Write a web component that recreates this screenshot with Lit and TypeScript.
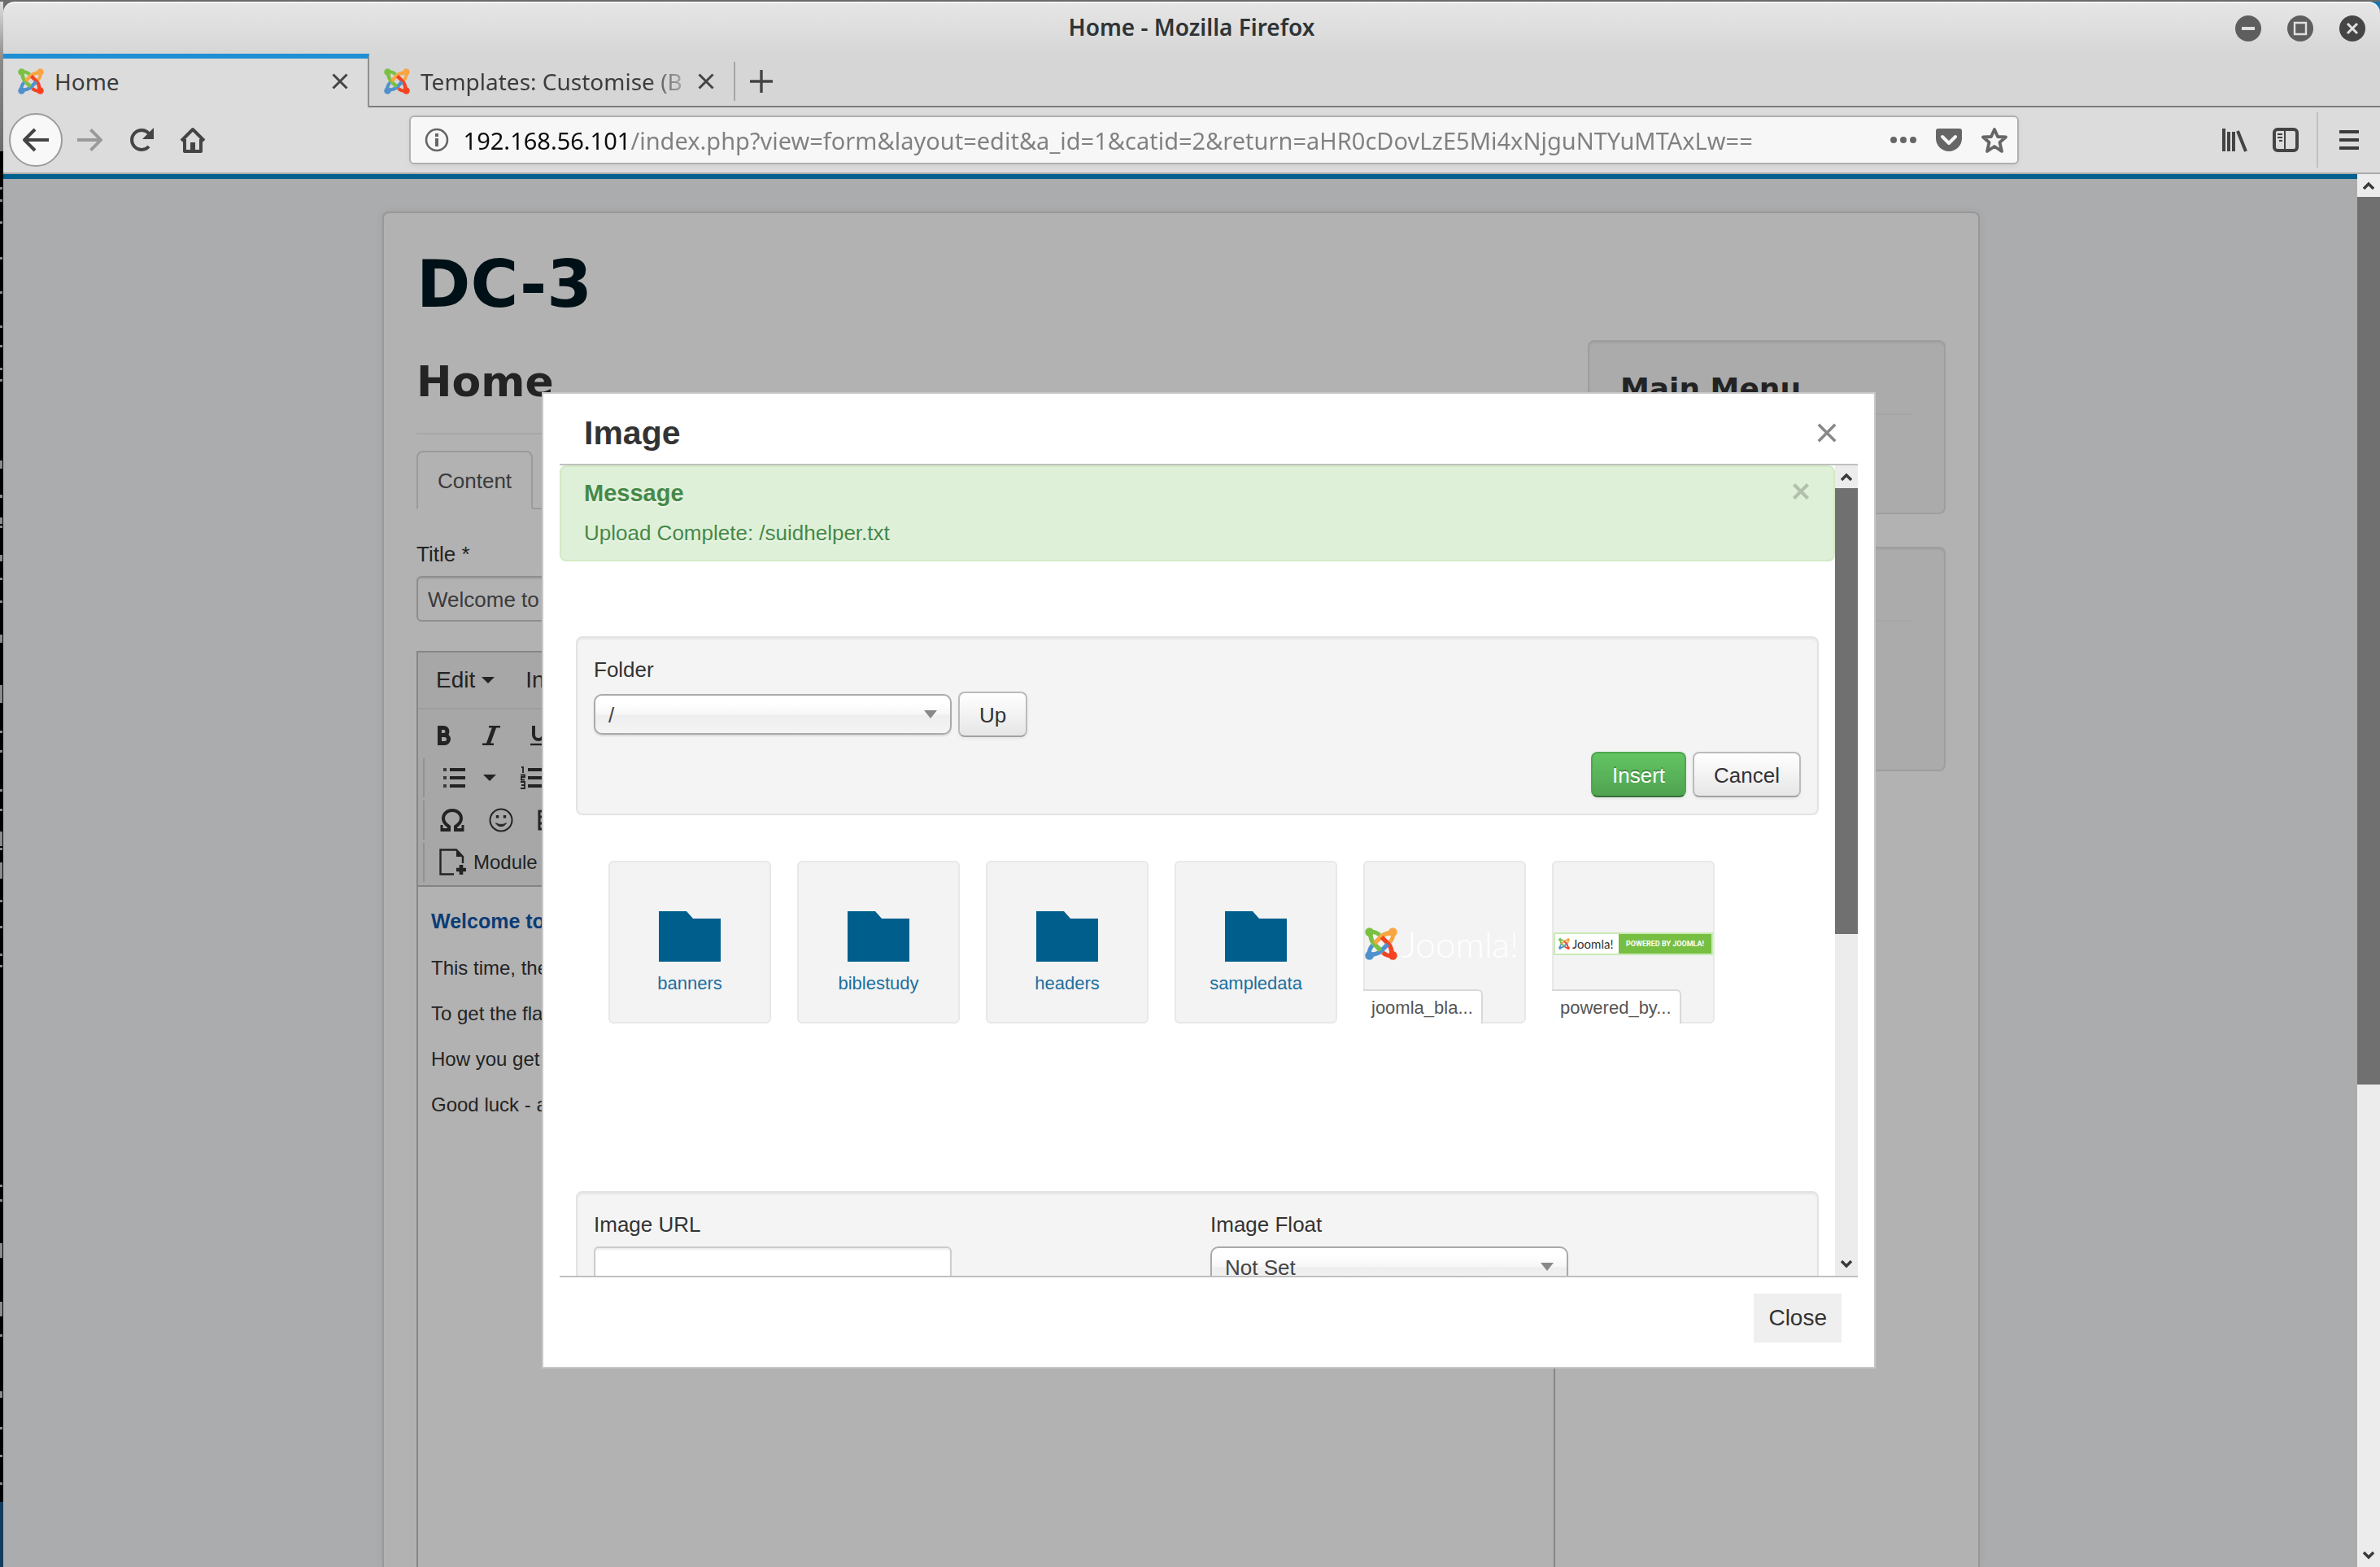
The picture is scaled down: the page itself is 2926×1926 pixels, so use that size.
import { LitElement, html, css, svg } from "lit";
import { customElement } from "lit/decorators.js";

const joomlaMark = (size: number) => html`
  <svg class="mark" width=${size} height=${size} viewBox="0 0 64 64" aria-hidden="true">
    ${[
      ["#7ac143", 0],
      ["#f9a541", 90],
      ["#f44321", 180],
      ["#5091cd", 270],
    ].map(
      ([color, turn]) => svg`
        <g transform="rotate(${turn} 32 32)" fill="none" stroke=${color} stroke-width="9">
          <circle cx="9" cy="9" r="8.5" fill=${color} stroke="none"></circle>
          <path d="M10 8C19 8 24 10 29 15" stroke-width="8"></path>
          <path d="M11 12C11 23 14 28 19 33L31 45"></path>
        </g>`,
    )}
    <path d="M31 45L25 39" stroke="#7ac143" stroke-width="9"></path>
  </svg>
`;

const cross = (size: number, color: string, width: number) => html`
  <svg width=${size} height=${size} viewBox="0 0 20 20" aria-hidden="true">
    <path d="M1.5 1.5L18.5 18.5M18.5 1.5L1.5 18.5" stroke=${color} stroke-width=${width} fill="none"></path>
  </svg>
`;

const chevron = (direction: "up" | "down") => html`
  <svg width="14" height="10" viewBox="0 0 14 10" aria-hidden="true">
    <path
      d=${direction === "up" ? "M1 9L7 3L13 9" : "M1 1L7 7L13 1"}
      fill="none"
      stroke="#3a3a3a"
      stroke-width="3.4"
    ></path>
  </svg>
`;

const caret = html`
  <svg width="16" height="8" viewBox="0 0 16 8" aria-hidden="true"><path d="M0 0H16L8 8Z" fill="#333"></path></svg>
`;

const base = css`
  * {
    box-sizing: border-box;
  }
  button,
  input,
  select {
    font: inherit;
    color: inherit;
    margin: 0;
    padding: 0;
    border: 0;
    background: none;
  }
  button {
    display: flex;
    align-items: center;
    justify-content: center;
    cursor: pointer;
  }
  svg {
    display: block;
    flex: none;
  }
  a {
    text-decoration: none;
  }
  h1,
  h2,
  h3,
  h4,
  p,
  ul {
    margin: 0;
    padding: 0;
  }
`;

const scrollbarStyles = css`
  .scrollbar {
    flex: none;
    width: 28px;
    display: flex;
    flex-direction: column;
    background: #ececec;
  }
  .scrollbar button {
    flex: none;
    height: 28px;
  }
  .thumb {
    background: #707070;
  }
  .track {
    flex: 1;
  }
`;

@customElement("browser-chrome")
export class BrowserChrome extends LitElement {
  static styles = [
    base,
    css`
      :host {
        display: block;
        font-family: "Noto Sans", "Open Sans", sans-serif;
        font-size: 28px;
        color: #2e3436;
      }
      .titlebar {
        display: grid;
        grid-template-columns: 1fr auto 1fr;
        align-items: center;
        height: 64px;
        padding: 0 18px;
        border-top: 2px solid #f4f4f4;
        border-radius: 14px 14px 0 0;
        background: linear-gradient(#e6e6e6, #d6d6d6);
      }
      .caption {
        grid-column: 2;
        font-size: 28px;
        line-height: 40px;
        font-weight: 600;
        padding-bottom: 4px;
      }
      .controls {
        display: flex;
        justify-content: flex-end;
        gap: 32px;
      }
      .tabs {
        display: flex;
        height: 66px;
        background: #d6d6d6;
      }
      .tab {
        display: flex;
        align-items: center;
        gap: 13px;
        width: 448px;
        padding: 4px 24px 0 18px;
        border-bottom: 2px solid #7c7c7c;
      }
      .tab.active {
        width: 450px;
        padding: 0 24px 4px 18px;
        border-top: 6px solid #1f8fd3;
        border-right: 2px solid #8f8f8f;
        border-bottom: 0;
        background: #dcdcdc;
      }
      .tab-name {
        flex: 1;
        overflow: hidden;
        white-space: nowrap;
        line-height: 40px;
        color: #3c3c3c;
      }
      .tab-name.fade {
        mask-image: linear-gradient(to right, #000 280px, transparent 340px);
      }
      .new-tab {
        display: flex;
        flex: 1;
        align-items: center;
        padding-top: 4px;
        border-bottom: 2px solid #7c7c7c;
      }
      .new-tab button {
        width: 66px;
        height: 48px;
        border-left: 2px solid #a6a6a6;
      }
      .nav {
        display: flex;
        align-items: center;
        height: 82px;
        padding: 0 26px 0 7px;
        background: #dcdcdc;
        border-bottom: 2px solid #aaa;
      }
      .back {
        width: 66px;
        height: 66px;
        border: 2px solid #9c9c9c;
        border-radius: 50%;
        background: #f8f8f8;
      }
      .history {
        display: flex;
        align-items: center;
        gap: 32px;
        padding-left: 17px;
      }
      .spacer {
        flex: 10;
      }
      .address {
        flex: 78;
        display: flex;
        align-items: center;
        height: 60px;
        padding: 0 12px 0 17px;
        border: 2px solid #b0b0b0;
        border-radius: 6px;
        background: #f7f7f7;
        box-shadow: 0 2px 6px rgba(0, 0, 0, 0.06);
      }
      .url {
        flex: 1;
        min-width: 0;
        height: 50px;
        margin: 0 18px;
        font-size: 29px;
        background-image: linear-gradient(to right, #0c0c0d 206px, #808080 206px);
        background-clip: text;
        -webkit-text-fill-color: transparent;
        outline: none;
      }
      .page-actions {
        display: flex;
        align-items: center;
        gap: 24px;
      }
      .tools {
        display: flex;
        align-items: center;
        gap: 30px;
      }
      .tools .menu {
        height: 68px;
        padding-left: 26px;
        margin-left: -8px;
        border-left: 2px solid #c0c0c0;
      }
    `,
  ];

  render() {
    return html`
      <header class="titlebar">
        <div class="caption">Home - Mozilla Firefox</div>
        <div class="controls">
          <button aria-label="Minimise">
            <svg width="32" height="32" viewBox="0 0 32 32">
              <circle cx="16" cy="16" r="16" fill="#5e5e5e"></circle>
              <path d="M8 16H24" stroke="#e0e0e0" stroke-width="4"></path>
            </svg>
          </button>
          <button aria-label="Maximise">
            <svg width="32" height="32" viewBox="0 0 32 32">
              <circle cx="16" cy="16" r="16" fill="#5e5e5e"></circle>
              <path d="M9 9H23V23H9Z" fill="none" stroke="#e0e0e0" stroke-width="2.4"></path>
            </svg>
          </button>
          <button aria-label="Close window">
            <svg width="32" height="32" viewBox="0 0 32 32">
              <circle cx="16" cy="16" r="16" fill="#454545"></circle>
              <path d="M10 10L22 22M22 10L10 22" stroke="#e0e0e0" stroke-width="3"></path>
            </svg>
          </button>
        </div>
      </header>

      <div class="tabs">
        <div class="tab active">
          ${joomlaMark(32)}
          <span class="tab-name">Home</span>
          <button aria-label="Close tab">${cross(20, "#444", 3)}</button>
        </div>
        <div class="tab">
          ${joomlaMark(32)}
          <span class="tab-name fade">Templates: Customise (B</span>
          <button aria-label="Close tab">${cross(20, "#444", 3)}</button>
        </div>
        <div class="new-tab">
          <button aria-label="New tab">
            <svg width="28" height="28" viewBox="0 0 28 28">
              <path d="M14 0V28M0 14H28" stroke="#444" stroke-width="3.4"></path>
            </svg>
          </button>
        </div>
      </div>

      <nav class="nav">
        <button class="back" aria-label="Back">
          <svg width="34" height="30" viewBox="0 0 34 30" fill="none" stroke="#444" stroke-width="4">
            <path d="M33 15H3M16 2L3 15L16 28" stroke-linejoin="round"></path>
          </svg>
        </button>
        <div class="history">
          <button aria-label="Forward">
            <svg width="33" height="30" viewBox="0 0 34 30" fill="none" stroke="#999" stroke-width="4">
              <path d="M1 15H31M18 2L31 15L18 28" stroke-linejoin="round"></path>
            </svg>
          </button>
          <button aria-label="Reload">
            <svg width="30" height="30" viewBox="0 0 30 30" fill="none" stroke="#444" stroke-width="4">
              <path d="M24 23A12 12 0 1 1 24 7"></path>
              <path d="M30 0V14H16Z" fill="#444" stroke="none"></path>
            </svg>
          </button>
          <button aria-label="Home">
            <svg width="32" height="32" viewBox="0 0 32 32" fill="none" stroke="#444" stroke-width="4">
              <path d="M2 17L16 3L30 17M6 15V30H26V15" stroke-linejoin="round"></path>
              <path d="M16 19V30" stroke-width="6"></path>
            </svg>
          </button>
        </div>
        <div class="spacer"></div>
        <div class="address">
          <svg width="30" height="30" viewBox="0 0 30 30">
            <circle cx="15" cy="15" r="13" fill="none" stroke="#666" stroke-width="2.6"></circle>
            <path d="M15 13V23M15 7V11" stroke="#666" stroke-width="4"></path>
          </svg>
          <input
            class="url"
            type="text"
            aria-label="Address"
            spellcheck="false"
            .value=${"192.168.56.101/index.php?view=form&layout=edit&a_id=1&catid=2&return=aHR0cDovLzE5Mi4xNjguNTYuMTAxLw=="}
          />
          <div class="page-actions">
            <button aria-label="Page actions">
              <svg width="32" height="8" viewBox="0 0 32 8" fill="#666">
                <circle cx="4" cy="4" r="4"></circle>
                <circle cx="16" cy="4" r="4"></circle>
                <circle cx="28" cy="4" r="4"></circle>
              </svg>
            </button>
            <button aria-label="Save to Pocket">
              <svg width="32" height="28" viewBox="0 0 32 28">
                <path d="M3 0H29Q32 0 32 3V12A16 16 0 0 1 0 12V3Q0 0 3 0Z" fill="#666"></path>
                <path
                  d="M8 10L16 18L24 10"
                  fill="none"
                  stroke="#f7f7f7"
                  stroke-width="4"
                  stroke-linecap="round"
                  stroke-linejoin="round"
                ></path>
              </svg>
            </button>
            <button aria-label="Bookmark this page">
              <svg width="32" height="32" viewBox="0 0 32 32">
                <path
                  d="M16 3L20 12L30 12.5L22.500 19L25 30L16 24L7 30L9.500 19L2 12.500L12 12Z"
                  fill="none"
                  stroke="#666"
                  stroke-width="3.8"
                  stroke-linejoin="round"
                ></path>
              </svg>
            </button>
          </div>
        </div>
        <div class="spacer"></div>
        <div class="tools">
          <button aria-label="Library">
            <svg width="32" height="30" viewBox="0 0 32 30" stroke="#444" stroke-width="4">
              <path d="M2 1V29M8 5V29M14 5V29M19 4L29 29"></path>
            </svg>
          </button>
          <button aria-label="Sidebars">
            <svg width="32" height="30" viewBox="0 0 32 30" fill="none" stroke="#444">
              <rect x="2" y="2" width="28" height="26" rx="4" stroke-width="4"></rect>
              <path d="M15 3V27" stroke-width="2"></path>
              <path d="M6 8H12M6 12H12M8 16H12" stroke-width="2"></path>
            </svg>
          </button>
          <button class="menu" aria-label="Open menu">
            <svg width="24" height="24" viewBox="0 0 24 24" stroke="#3c3c3c" stroke-width="4">
              <path d="M0 2H24M0 12H24M0 22H24"></path>
            </svg>
          </button>
        </div>
      </nav>
    `;
  }
}

@customElement("article-form")
export class ArticleForm extends LitElement {
  static styles = [
    base,
    css`
      :host {
        display: flex;
        flex: 1;
        min-width: 0;
        flex-direction: column;
        overflow: hidden;
        padding: 40px 38px 0 40px;
        border-top: 6px solid #08c;
        background: #f4f6f8;
        font-family: "Liberation Sans", Arial, sans-serif;
        font-size: 26px;
        line-height: 38px;
        color: #333;
      }
      .container {
        flex: 1;
        display: flex;
        flex-direction: column;
        width: 100%;
        max-width: 1964px;
        margin: 0 auto;
        padding: 40px 40px 0;
        border: 2px solid #dadada;
        border-bottom: 0;
        border-radius: 8px 8px 0 0;
        background: #fff;
        box-shadow: 0 0 12px rgba(0, 0, 0, 0.05);
      }
      h1,
      h2,
      h3 {
        font-family: "DejaVu Sans", Verdana, sans-serif;
        font-weight: bold;
      }
      .brand {
        font-size: 80px;
        line-height: 96px;
        color: #001722;
        margin-bottom: 20px;
      }
      .columns {
        flex: 1;
        display: flex;
        gap: 40px;
      }
      .main {
        flex: 1;
        min-width: 0;
        display: flex;
        flex-direction: column;
      }
      .page-title {
        font-size: 52px;
        line-height: 62px;
        padding: 20px 0 32px;
        margin-bottom: 20px;
        border-bottom: 2px solid #eee;
      }
      .tablist {
        display: flex;
        margin-bottom: 36px;
        border-bottom: 2px solid #ddd;
      }
      .tablist button {
        padding: 16px 24px 14px;
        margin-bottom: -2px;
        border: 2px solid #ddd;
        border-bottom-color: #fff;
        border-radius: 8px 8px 0 0;
        color: #555;
      }
      .field {
        width: 440px;
        height: 56px;
        margin: 8px 0 36px;
        padding: 2px 12px 0;
        border: 2px solid #ccc;
        border-radius: 6px;
        color: #555;
        box-shadow: inset 0 2px 2px rgba(0, 0, 0, 0.075);
      }
      .editor {
        flex: 1;
        border: 2px solid #c0c0c0;
        border-bottom: 0;
      }
      .menubar {
        display: flex;
        gap: 38px;
        height: 70px;
        padding-left: 22px;
        border-bottom: 2px solid #e2e2e2;
        background: #f0f0f0;
        font-size: 28px;
      }
      .menubar button {
        gap: 8px;
      }
      .toolbars {
        padding: 6px 0 2px;
        border-bottom: 2px solid #bcbcbc;
        background: #f0f0f0;
      }
      .row {
        display: flex;
        height: 48px;
        margin: 2px 6px;
        border-left: 2px solid #d0d0d0;
      }
      .row + .row {
        margin-top: 4px;
      }
      .row.first {
        gap: 2px;
        margin-left: 2px;
        border-left-color: transparent;
      }
      .row.first button {
        width: 56px;
      }
      .row.lists .wide {
        width: 72px;
      }
      .row.lists .wider {
        width: 88px;
      }
      .row.symbols {
        padding-left: 4px;
      }
      .row.symbols button {
        width: 60px;
      }
      .row.modules {
        padding-left: 18px;
        font-size: 24px;
      }
      .row.modules button {
        gap: 8px;
      }
      .copy {
        padding: 24px 16px;
        font-size: 24px;
        line-height: 36px;
      }
      .copy p {
        margin-bottom: 20px;
      }
      .copy .lead {
        margin-bottom: 22px;
        font-size: 25px;
        font-weight: bold;
        color: #1257a8;
      }
      .side {
        width: 440px;
      }
      .well {
        padding: 34px 38px;
        border: 2px solid #e3e3e3;
        border-radius: 8px;
        background: #f5f5f5;
        box-shadow: inset 0 2px 2px rgba(0, 0, 0, 0.05);
        min-height: 214px;
        margin-bottom: 40px;
      }
      .well.tall {
        min-height: 276px;
      }
      .well h3 {
        font-size: 36px;
        line-height: 48px;
        min-height: 56px;
        border-bottom: 2px solid #eee;
      }
    `,
  ];

  render() {
    return html`
      <div class="container">
        <h1 class="brand">DC-3</h1>
        <div class="columns">
          <main class="main">
            <h2 class="page-title">Home</h2>
            <div class="tablist" role="tablist"><button role="tab" aria-selected="true">Content</button></div>
            <label for="title">Title *</label>
            <input class="field" id="title" type="text" .value=${"Welcome to"} />
            <div class="editor">
              <div class="menubar">
                <button>Edit ${caret}</button>
                <button>Insert ${caret}</button>
              </div>
              <div class="toolbars">
                <div class="row first">
                  <button aria-label="Bold">
                    <svg width="16" height="24" viewBox="0 0 16 24" fill="none" stroke="#333" stroke-width="5">
                      <path d="M2.500 2.500H7.500A4.500 4.500 0 0 1 7.500 11.500H2.500ZM2.500 11.500H8.500A5 5 0 0 1 8.500 21.500H2.500Z"></path>
                    </svg>
                  </button>
                  <button aria-label="Italic">
                    <svg width="22" height="24" viewBox="0 0 22 24" fill="none" stroke="#333">
                      <path d="M8 1.200H22M0 22.800H14" stroke-width="2.400"></path>
                      <path d="M15 1L7 23" stroke-width="5"></path>
                    </svg>
                  </button>
                  <button aria-label="Underline">
                    <svg width="20" height="26" viewBox="0 0 20 26" fill="none" stroke="#333">
                      <path d="M4 1V12A6 6 0 0 0 16 12V1" stroke-width="4"></path>
                      <path d="M0 24H20" stroke-width="2.400"></path>
                    </svg>
                  </button>
                </div>
                <div class="row lists">
                  <button class="wide" aria-label="Bulleted list">
                    <svg width="28" height="26" viewBox="0 0 28 26" stroke="#333" stroke-width="4">
                      <path d="M9 3H28M9 13H28M9 23H28"></path>
                      <path d="M1 3H5M1 13H5M1 23H5" stroke="#555"></path>
                    </svg>
                  </button>
                  <button aria-label="Bullet styles">${caret}</button>
                  <button class="wider" aria-label="Numbered list">
                    <svg width="28" height="28" viewBox="0 0 28 28" fill="none" stroke="#333">
                      <path d="M9 4H28M9 14H28M9 24H28" stroke-width="4"></path>
                      <path d="M1 1H3V8M0 10.500H5V13H1V16.500H5M0 19H5V27H0M1 23H5" stroke-width="1.800"></path>
                    </svg>
                  </button>
                </div>
                <div class="row symbols">
                  <button aria-label="Special character">
                    <svg width="30" height="28" viewBox="0 0 30 28" fill="none" stroke="#333" stroke-width="4">
                      <path d="M1 26H11V22C5 18 4 15 4 12C4 6 9 2 15 2S26 6 26 12C26 15 25 18 19 22V26H29"></path>
                      <path d="M2 20V28M28 20V28" stroke-width="3"></path>
                    </svg>
                  </button>
                  <button aria-label="Emoticons">
                    <svg width="30" height="30" viewBox="0 0 30 30" fill="none" stroke="#333" stroke-width="2">
                      <circle cx="15" cy="15" r="13.500"></circle>
                      <path d="M10.500 9V12.500M19.500 9V12.500" stroke-width="3.400"></path>
                      <path d="M8.500 18.500C11 24 19 24 21.500 18.500C18 21 12 21 8.500 18.500Z" fill="#333" stroke-width="1"></path>
                    </svg>
                  </button>
                  <button aria-label="Media">
                    <svg width="30" height="26" viewBox="0 0 30 26" fill="none" stroke="#333" stroke-width="3">
                      <path d="M2 2H28V24H2ZM8 2V24M22 2V24M2 9H8M2 17H8M22 9H28M22 17H28"></path>
                    </svg>
                  </button>
                </div>
                <div class="row modules">
                  <button>
                    <svg width="34" height="34" viewBox="0 0 34 34" fill="none" stroke="#333" stroke-width="2.400">
                      <path d="M18 31.500H1.500V1.500H21L29 10V18"></path>
                      <path d="M21 1L29 10H21Z" fill="#333" stroke="none"></path>
                      <path d="M27 20V32M21 26H33" stroke-width="4.600"></path>
                    </svg>
                    Module
                  </button>
                </div>
              </div>
              <div class="copy">
                <p class="lead">Welcome to DC-3</p>
                <p>This time, there</p>
                <p>To get the flag</p>
                <p>How you get it</p>
                <p>Good luck - and</p>
              </div>
            </div>
          </main>
          <aside class="side">
            <section class="well"><h3>Main Menu</h3></section>
            <section class="well tall"><h3></h3></section>
          </aside>
        </div>
      </div>
    `;
  }
}

@customElement("image-dialog")
export class ImageDialog extends LitElement {
  static styles = [
    base,
    scrollbarStyles,
    css`
      :host {
        display: flex;
        flex-direction: column;
        padding: 0 20px;
        border: 2px solid #c8c8c8;
        background: #fff;
        font-family: "Liberation Sans", Arial, sans-serif;
        font-size: 26px;
        line-height: 38px;
        color: #333;
      }
      .head {
        display: flex;
        align-items: center;
        justify-content: space-between;
        padding: 24px 26px 14px 30px;
        border-bottom: 2px solid #c0c0c0;
      }
      .head h3 {
        font-size: 41px;
        line-height: 48px;
      }
      .body {
        flex: 1;
        min-height: 0;
        display: flex;
        border-bottom: 2px solid #c0c0c0;
      }
      .content {
        flex: 1;
        min-width: 0;
        overflow: hidden;
      }
      .alert {
        display: flex;
        justify-content: space-between;
        align-items: flex-start;
        padding: 14px 30px 14px 28px;
        margin-bottom: 92px;
        border: 2px solid #d3eac6;
        border-radius: 8px;
        background: #def0d8;
        color: #468847;
        text-shadow: 0 2px 0 rgba(255, 255, 255, 0.5);
      }
      .alert h4 {
        font-size: 29px;
        line-height: 36px;
        margin-bottom: 12px;
      }
      .alert button {
        padding-top: 6px;
      }
      .well {
        margin: 0 20px;
        padding: 20px;
        border: 2px solid #e3e3e3;
        border-radius: 8px;
        background: #f4f4f4;
        box-shadow: inset 0 2px 2px rgba(0, 0, 0, 0.05);
      }
      .line {
        display: flex;
        align-items: center;
        gap: 8px;
        margin-top: 8px;
      }
      .actions {
        display: flex;
        justify-content: flex-end;
        gap: 8px;
        margin-top: 18px;
      }
      label {
        display: block;
      }
      .select {
        display: grid;
        align-items: center;
        width: 440px;
      }
      .select select {
        grid-area: 1 / 1;
        appearance: none;
        height: 50px;
        padding: 2px 16px 0;
        border: 2px solid #aaa;
        border-radius: 10px;
        background: linear-gradient(#fff 20%, #f6f6f6 50%, #eee 52%, #f4f4f4 100%);
        box-shadow: 0 2px 2px rgba(0, 0, 0, 0.1);
        color: #444;
      }
      .select svg {
        grid-area: 1 / 1;
        justify-self: end;
        margin-right: 18px;
        pointer-events: none;
      }
      .btn {
        height: 56px;
        padding: 2px 24px 0;
        border: 2px solid #bbb;
        border-bottom-color: #a2a2a2;
        border-radius: 8px;
        background: linear-gradient(#fff, #e6e6e6);
        box-shadow: 0 2px 4px rgba(0, 0, 0, 0.05);
      }
      .btn.primary {
        border-color: #4fa651 #4fa651 #387038;
        background: linear-gradient(#62c462, #51a351);
        color: #fff;
        text-shadow: 0 -2px 0 rgba(0, 0, 0, 0.25);
      }
      .tiles {
        display: flex;
        flex-wrap: wrap;
        gap: 32px;
        margin: 56px 32px 206px 60px;
        list-style: none;
        font-size: 22px;
        line-height: 34px;
      }
      .tile {
        display: flex;
        flex-direction: column;
        align-items: center;
        width: 200px;
        height: 200px;
        border: 2px solid #e8e8e8;
        border-radius: 6px;
        background: #f3f3f3;
        color: #555;
      }
      .tile.folder {
        gap: 10px;
        padding-top: 60px;
        color: #1c6f9f;
      }
      .picture {
        display: flex;
        align-items: center;
        width: 196px;
        height: 44px;
        margin-top: 78px;
        font-family: Lato, sans-serif;
        line-height: 24px;
        white-space: nowrap;
      }
      .picture.plain {
        gap: 5px;
        font-size: 44px;
        font-weight: 300;
        color: #fff;
      }
      .picture.badge {
        height: 28px;
        margin-top: 86px;
        border: 2px solid #c9eab5;
        background: #77bf43;
      }
      .badge-left {
        display: flex;
        align-items: center;
        gap: 3px;
        width: 78px;
        height: 24px;
        padding-left: 4px;
        background: #fff;
        font-size: 15px;
        color: #333;
      }
      .badge-right {
        flex: 1;
        text-align: center;
        font-family: Roboto, sans-serif;
        font-size: 9px;
        font-weight: bold;
        color: #fff;
      }
      .file-name {
        align-self: flex-start;
        margin: auto 0 -2px -2px;
        padding: 4px 10px 2px;
        border: solid #d8d8d8;
        border-width: 2px 2px 0 0;
        border-radius: 0 6px 0 6px;
        background: #fff;
      }
      .fields {
        display: grid;
        grid-template-columns: 1fr 1fr;
        gap: 32px;
      }
      .text {
        display: block;
        width: 440px;
        height: 56px;
        margin-top: 8px;
        padding: 0 12px;
        border: 2px solid #ccc;
        border-radius: 6px;
        background: #fff;
        box-shadow: inset 0 2px 2px rgba(0, 0, 0, 0.075);
      }
      .fields .select {
        margin-top: 8px;
      }
      .thumb {
        flex: none;
        height: 55%;
      }
      .foot {
        display: flex;
        justify-content: flex-end;
        padding: 20px 20px 30px;
      }
      .close {
        height: 60px;
        padding: 0 18px;
        background: #efefef;
        font-size: 28px;
      }
    `,
  ];

  private select(id: string, value: string) {
    return html`
      <div class="select">
        <select id=${id}>
          <option>${value}</option>
        </select>
        <svg width="16" height="10" viewBox="0 0 16 10" aria-hidden="true"><path d="M0 0H16L8 10Z" fill="#888"></path></svg>
      </div>
    `;
  }

  render() {
    return html`
      <div class="head">
        <h3>Image</h3>
        <button aria-label="Close dialog">${cross(24, "#888", 3)}</button>
      </div>
      <div class="body">
        <div class="content">
          <div class="alert" role="alert">
            <div>
              <h4>Message</h4>
              <p>Upload Complete: /suidhelper.txt</p>
            </div>
            <button aria-label="Dismiss message">${cross(20, "#b2c0ad", 4.2)}</button>
          </div>

          <div class="well">
            <label for="folder">Folder</label>
            <div class="line">
              ${this.select("folder", "/")}
              <button class="btn">Up</button>
            </div>
            <div class="actions">
              <button class="btn primary">Insert</button>
              <button class="btn">Cancel</button>
            </div>
          </div>

          <ul class="tiles">
            ${["banners", "biblestudy", "headers", "sampledata"].map(
              (name) => html`
                <li>
                  <a class="tile folder" href="#${name}">
                    <svg width="76" height="62" viewBox="0 0 76 62" aria-hidden="true">
                      <path d="M0 0H34L42 9H76V62H0Z" fill="#005e8d"></path>
                    </svg>
                    ${name}
                  </a>
                </li>
              `,
            )}
            <li>
              <a class="tile" href="#joomla_black">
                <span class="picture plain">${joomlaMark(40)}<span>Joomla!</span></span>
                <span class="file-name">joomla_bla...</span>
              </a>
            </li>
            <li>
              <a class="tile" href="#powered_by">
                <span class="picture badge">
                  <span class="badge-left">${joomlaMark(14)}<span>Joomla!</span></span>
                  <span class="badge-right">POWERED BY JOOMLA!</span>
                </span>
                <span class="file-name">powered_by...</span>
              </a>
            </li>
          </ul>

          <div class="well fields">
            <div>
              <label for="image-url">Image URL</label>
              <input class="text" id="image-url" type="text" />
            </div>
            <div>
              <label for="image-float">Image Float</label>
              ${this.select("image-float", "Not Set")}
            </div>
          </div>
        </div>
        <div class="scrollbar">
          <button aria-label="Scroll up">${chevron("up")}</button>
          <div class="thumb"></div>
          <div class="track"></div>
          <button aria-label="Scroll down">${chevron("down")}</button>
        </div>
      </div>
      <div class="foot"><button class="close">Close</button></div>
    `;
  }
}

/* Terminal text showing past the window's left edge: y position and height of each fragment. */
const fragments = [
  [230, 3], [245, 3], [272, 3], [316, 3], [358, 3], [400, 3], [424, 3], [452, 3], [466, 3], [566, 10], [608, 4],
  [636, 8], [646, 3], [682, 8], [710, 3], [738, 3], [780, 10], [842, 6], [848, 16], [898, 3], [922, 3], [970, 3],
  [994, 3], [1022, 18], [1042, 3], [1060, 20], [1106, 3], [1138, 3], [1172, 3], [1186, 3], [1456, 3], [1474, 3],
  [1528, 18], [1600, 18], [1640, 3], [1710, 8], [1754, 3], [1788, 3], [1822, 3],
];

@customElement("app-root")
export class AppRoot extends LitElement {
  static styles = [
    base,
    scrollbarStyles,
    css`
      :host {
        display: flex;
        height: 100vh;
        overflow: hidden;
        border-top: 2px solid #6e6c6a;
        box-sizing: border-box;
        background: linear-gradient(to right, #6e6c6a 90%, #1673ac);
      }
      .desktop {
        flex: none;
        width: 4px;
        overflow: hidden;
      }
      .window {
        flex: 1;
        min-width: 0;
        display: flex;
        flex-direction: column;
      }
      .viewport {
        flex: 1;
        min-height: 0;
        display: flex;
      }
      .page {
        position: relative;
        flex: 1;
        min-width: 0;
        display: flex;
      }
      .backdrop {
        position: absolute;
        inset: 0;
        background: rgba(0, 0, 0, 0.3);
      }
      .dialog {
        position: absolute;
        top: 268px;
        left: calc(50% - 785px);
        width: 1640px;
        max-width: 100%;
        height: calc(100vh - 726px);
      }
      .thumb {
        flex: 655;
      }
      .track {
        flex: 339;
      }
    `,
  ];

  render() {
    return html`
      <svg class="desktop" width="4" height="1924" viewBox="0 2 4 1924" aria-hidden="true">
        <linearGradient id="edge" x2="0" y2="1">
          <stop offset="0" stop-color="#e0e0e0"></stop>
          <stop offset="0.4" stop-color="#8a8a8a"></stop>
          <stop offset="1" stop-color="#6b6b6b"></stop>
        </linearGradient>
        <rect y="0" width="4" height="186" fill="url(#edge)"></rect>
        <rect y="186" width="4" height="1660" fill="#000"></rect>
        <rect y="1846" width="4" height="80" fill="#143c5c"></rect>
        ${fragments.map(([y, h]) => svg`<rect y=${y} width="3" height=${h} fill="#8c8c8c"></rect>`)}
      </svg>
      <div class="window">
        <browser-chrome></browser-chrome>
        <div class="viewport">
          <div class="page">
            <article-form></article-form>
            <div class="backdrop"></div>
            <image-dialog class="dialog" role="dialog" aria-label="Image"></image-dialog>
          </div>
          <div class="scrollbar">
            <button aria-label="Scroll up">${chevron("up")}</button>
            <div class="thumb"></div>
            <div class="track"></div>
            <button aria-label="Scroll down">${chevron("down")}</button>
          </div>
        </div>
      </div>
    `;
  }
}
